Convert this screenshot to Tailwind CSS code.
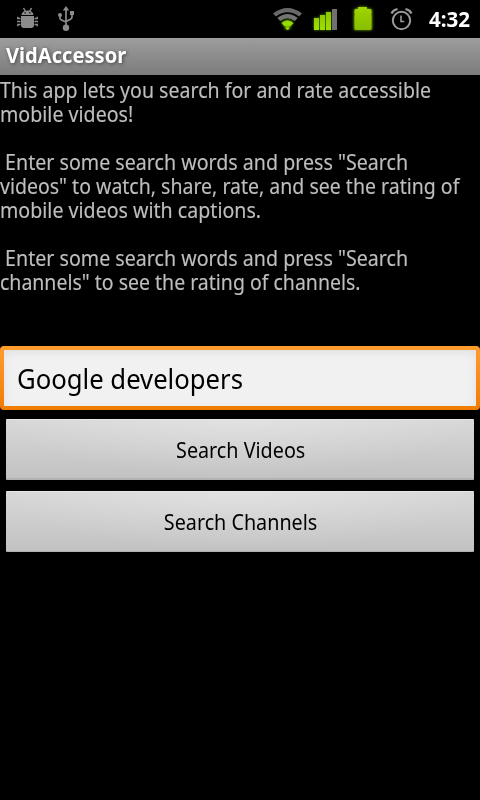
<!DOCTYPE html>
<html lang="en">
<head>
<meta charset="utf-8">
<title>VidAccessor</title>
<script src="https://cdn.jsdelivr.net/npm/@tailwindcss/browser@4"></script>
</head>
<body class="bg-black">
<div class="w-[480px] h-[800px] bg-black overflow-hidden flex flex-col font-['Noto_Sans','Open_Sans',sans-serif]">
  <header class="h-[38px] shrink-0 flex items-center">
    <svg class="w-[260px] h-[38px]" viewBox="0 0 260 38" fill="#8c8c8c">
      <path d="M21.500 15Q22 10.500 27.500 10.500T33.500 15ZM21 16h13v9q0 3-3 3h-7q-3 0-3-3Z"/>
      <path d="M23.500 8l2 3.500M31.500 8l-2 3.500M17 21.500h3.500M34.500 21.500h3.500M20.500 18.500h-2.700v-1.700M34.500 18.500h2.700v-1.700M20.500 24.500h-2.700v1.700M34.500 24.500h2.700v1.700" fill="none" stroke="#8c8c8c" stroke-width="1.500"/>
      <path d="M24.500 12.300h1.300v1.300h-1.300zM29.200 12.300h1.300v1.300h-1.300z" fill="#000"/>
      <path d="M66 6l3.200 4.500h-6.400Z"/>
      <path d="M66 9v18M60 15.500v2.500q0 1.500 1.500 2l4.500 2M72 14v3q0 1.500-1.500 2.200l-4.500 2.300" fill="none" stroke="#8c8c8c" stroke-width="1.700"/>
      <circle cx="66" cy="27.800" r="3.200"/><circle cx="60" cy="15" r="2"/><path d="M70 11h4v4h-4z"/>
    </svg>
    <svg class="w-[160px] h-[38px]" viewBox="260 0 160 38">
      <defs>
        <filter id="glow" x="-40%" y="-40%" width="180%" height="180%"><feGaussianBlur stdDeviation="1.500"/></filter>
        <linearGradient id="lime" x2="0" y2="1"><stop stop-color="#8cc400"/><stop offset="1" stop-color="#a0df00"/></linearGradient>
        <linearGradient id="cell" x2="0" y2="1"><stop stop-color="#a0d600"/><stop offset="1" stop-color="#86bd00"/></linearGradient>
      </defs>
      <path d="M273 13.500Q287.500 2.500 302 13.500L299 16.500Q287.500 8.200 276 16.500Z" fill="#696969"/>
      <path d="M277.300 18Q287.500 10 297.700 18L294.800 21Q287.500 15.500 280.200 21Z" fill="#737373"/>
      <path d="M281.500 22.500Q287.500 17.500 293.500 22.500L290 26.500V29h-5V26.500Z" fill="#78c800" filter="url(#glow)"/>
      <path d="M281.500 23Q287.500 18 293.500 23L290 26.500Q287.500 25 285 26.500Z" fill="#98da00"/>
      <circle cx="287.500" cy="28.300" r="1.700" fill="#8fd000"/>
      <g fill="#579000" filter="url(#glow)"><path d="M314 18h5v12h-5zM320 15h5v15h-5zM326 12h5v18h-5z"/></g>
      <path d="M314 18h5v12h-5zM320 15h5v15h-5zM326 12h5v18h-5z" fill="url(#lime)"/>
      <path d="M332 9h5v21h-5z" fill="#707070"/>
      <path d="M354 9h4V7h9v2h5v21h-18Z" fill="#78b000" filter="url(#glow)"/>
      <path d="M356 9H358V7.500q0-.500.500-.500h8q.500 0 .500.500V9h3q1.500 0 1.500 1.500v3l-.5 1 .5 1.500v12.500q0 1.500-1.500 1.500h-14q-1.500 0-1.500-1.500V16l.5-1.500-.5-1v-3q0-1.500 1.500-1.500Z" fill="url(#cell)"/>
      <g fill="none" stroke="#999"><circle cx="401.500" cy="20.500" r="8.700" stroke-width="2"/><path d="M401 15.500v6h3.300" stroke-width="1.600"/><path d="M391.500 13.500q1.500-3.500 6-4.500M411.500 13.500q-1.500-3.500-6-4.500" stroke-width="2.200"/></g>
    </svg>
    <span class="block ml-[9px] text-[21px] leading-[38px] font-bold text-white whitespace-nowrap origin-left scale-x-[.98]">4:32</span>
  </header>
  <div class="h-[37px] shrink-0 bg-linear-to-b from-[#9c9c9c] to-[#7c7c7c] border-t border-[#a2a09f] pl-[6px]">
    <h1 class="w-max text-[21px] leading-[33px] font-bold text-white whitespace-nowrap origin-left scale-x-[.958] [text-shadow:1px_1px_4px_#444]">VidAccessor</h1>
  </div>
  <main class="flex flex-col">
    <div class="h-[271px] pt-[3px] text-[21px] leading-[24px] text-[#bebebe] [-webkit-text-stroke:0.15px_#bebebe]">
      <div class="w-max whitespace-pre origin-left scale-x-[.931]">This app lets you search for and rate accessible</div>
      <div class="w-max whitespace-pre origin-left scale-x-[.934]">mobile videos!</div>
      <div class="w-max whitespace-pre origin-left scale-x-[.935] mt-6"> Enter some search words and press "Search</div>
      <div class="w-max whitespace-pre origin-left scale-x-[.929]">videos" to watch, share, rate, and see the rating of</div>
      <div class="w-max whitespace-pre origin-left scale-x-[.934]">mobile videos with captions.</div>
      <div class="w-max whitespace-pre origin-left scale-x-[.935] mt-6"> Enter some search words and press "Search</div>
      <div class="w-max whitespace-pre origin-left scale-x-[.928]">channels" to see the rating of channels.</div>
    </div>
    <div class="h-[64px] rounded-[4px] p-[4px] bg-linear-to-b from-[#ff9d2c] to-[#f07c00]">
      <div class="h-[56px] bg-[#f1f1f1] shadow-[inset_0_3px_8px_#e0e0e0] pl-[13px]">
        <div class="w-max text-[27px] leading-[57px] text-black whitespace-nowrap origin-left scale-x-[.951]">Google developers</div>
      </div>
    </div>
    <button class="mt-[9px] mx-[6px] h-[61px] rounded-[1px] border-t border-b-2 border-t-[#e6e6e6] border-b-[#b2b4b3] bg-[radial-gradient(ellipse_50%_100%_at_50%_0%,#ffffff40,#ffffff00),linear-gradient(#d8d8d8,#c2c2c2)] flex justify-center items-center text-[21px] text-black"><span class="block pt-[4px] pl-[2px] whitespace-nowrap scale-x-[.94]">Search Videos</span></button>
    <button class="mt-[11px] mx-[6px] h-[61px] rounded-[1px] border-t border-b border-t-[#e6e6e6] border-b-[#adb0af] bg-[radial-gradient(ellipse_50%_100%_at_50%_0%,#ffffff40,#ffffff00),linear-gradient(#d8d8d8,#c2c2c2)] flex justify-center items-center text-[21px] text-black"><span class="block pt-[2px] pl-[2px] whitespace-nowrap scale-x-[.94]">Search Channels</span></button>
  </main>
</div>
</body>
</html>
